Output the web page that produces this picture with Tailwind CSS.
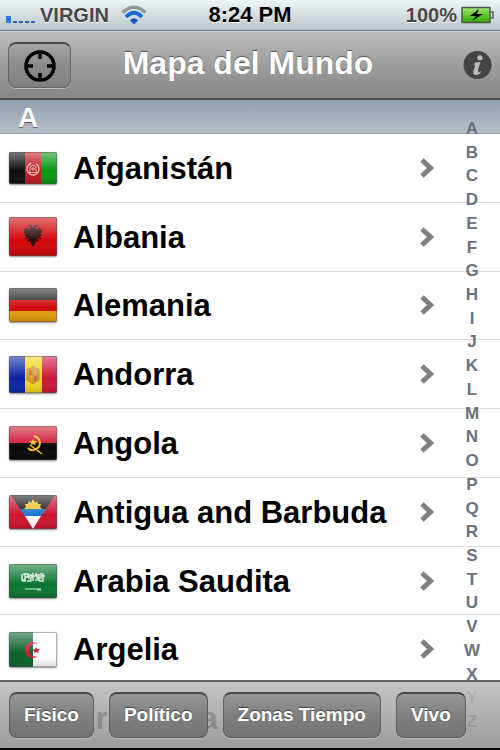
<!DOCTYPE html>
<html lang="es">
<head>
    <meta charset="UTF-8">
    <meta name="viewport" content="width=device-width, initial-scale=1.0">
    <title>Mapa del Mundo</title>
    <script src="https://cdn.jsdelivr.net/npm/@tailwindcss/browser@4"></script>
</head>
<body class="h-screen overflow-hidden bg-white font-['Liberation_Sans',Arial,sans-serif] font-bold text-black">
    <div class="relative flex h-full flex-col overflow-hidden">

        <!-- Status bar -->
        <div class="grid h-[31px] shrink-0 grid-cols-3 items-center border-b border-[#66727a] bg-linear-to-b from-[#edf4f7] to-[#bcc7cb] px-1.5 text-xl text-[#484848]">
            <div class="flex items-center">
                <svg class="mt-2 h-[8px] w-[30px]" viewBox="0 0 30 8">
                    <rect x="0" y="1" width="5" height="7" fill="#1f7fdf"/>
                    <path d="M7 7h4M13 7h4M19 7h4M25 7h4" stroke="#2e62b5" stroke-width="2"/>
                </svg>
                <span class="ml-1 [text-shadow:0_1px_0_#fff]">VIRGIN</span>
                <svg class="ml-3 h-[20px] w-[26px] shrink-0" viewBox="0 0 26 20" fill="none">
                    <path d="M1.500 7.500Q13 -3 24.500 7.500" stroke="#929698" stroke-width="3.500"/>
                    <path d="M5 12Q13 3.500 21 12" stroke="#1f68da" stroke-width="4"/>
                    <path d="M9 15.500Q13 11 17 15.500L13 19.500Z" fill="#1554cc"/>
                </svg>
            </div>
            <div class="text-center text-[22px] whitespace-nowrap text-black [text-shadow:0_1px_0_#fff]">8:24 PM</div>
            <div class="flex items-center justify-end gap-1">
                <span class="[text-shadow:0_1px_0_#fff]">100%</span>
                <svg class="h-[18px] w-[33px]" viewBox="0 0 33 18">
                    <defs>
                        <linearGradient id="charge" x1="0" y1="0" x2="0" y2="1">
                            <stop offset="0" stop-color="#a7e580"/>
                            <stop offset=".5" stop-color="#5fca2c"/>
                            <stop offset="1" stop-color="#35a80c"/>
                        </linearGradient>
                    </defs>
                    <rect x="1" y="1.500" width="28" height="15" fill="url(#charge)" stroke="#4a5a4a" stroke-width="1.500"/>
                    <path d="M30 6h2v6h-2" fill="none" stroke="#55605c" stroke-width="1.500"/>
                    <path d="M18 3L9 10h6l-4 5 11-7h-6z" fill="#000"/>
                </svg>
            </div>
        </div>

        <!-- Title bar -->
        <header class="grid h-[69px] shrink-0 grid-cols-[63px_1fr_63px] items-center border-t border-b-2 border-t-[#cfcfcf] border-b-[#4c4c4c] bg-linear-to-b from-[#bdbdbd] via-[#9e9e9e] to-[#878787] px-2">
            <button type="button" aria-label="Localizar" class="flex h-[46px] items-center justify-center rounded-lg border border-t-2 border-[#666] border-t-[#484848] bg-linear-to-b from-[#a5a5a5] from-0% via-[#8b8b8b] via-50% to-[#808080] shadow-[0_1px_0_#bbb]">
                <svg class="h-8 w-8" viewBox="0 0 32 32" fill="none" stroke="#000">
                    <circle cx="16" cy="16" r="14" stroke-width="3.500"/>
                    <path d="M16 2v7M16 23v7M2 16h7M23 16h7" stroke-width="3.500"/>
                </svg>
            </button>
            <h1 class="pr-1 pb-1 text-center text-[32px] leading-10 whitespace-nowrap text-white [text-shadow:0_-1px_1px_#555]">Mapa del Mundo</h1>
            <button type="button" aria-label="Información" class="h-[30px] w-[29px] justify-self-end">
                <svg class="h-full w-full" viewBox="0 0 30 30">
                    <circle cx="15" cy="15" r="14.500" fill="#444"/>
                    <circle cx="17.500" cy="7.500" r="2.700" fill="#b8b8b8"/>
                    <path d="M10.500 14.500Q13.500 11.500 18 12L15.500 20.500Q15 24 19 21Q17.500 25.500 13.500 25.500Q9.500 25.500 11 20.500L12.500 15.500Q12.500 14 10.500 14.500Z" fill="#b8b8b8"/>
                </svg>
            </button>
        </header>

        <main class="relative">
            <h2 class="h-[34px] border-b border-[#989fa7] bg-linear-to-b from-[#91a0ab] to-[#b7bfca] pl-[18px] text-[28px] leading-[35px] text-white [text-shadow:0_1px_1px_#555]">A</h2>
            <ul id="countries" class="grid h-[619px] auto-rows-fr"></ul>
            <nav id="index" aria-label="Índice" class="absolute top-[17px] right-3 grid h-[617px] w-8 auto-rows-fr text-center text-[17px] text-[#69727e]"></nav>
        </main>

        <footer class="absolute inset-x-0 bottom-0 flex h-[70px] items-center gap-[15px] border-t-2 border-b-2 border-t-[#636363] border-b-black bg-linear-to-b from-[#bebebe]/90 to-[#8b8b8b]/85 pl-[9px] text-[19px] text-white">
            <button type="button" class="h-[46px] rounded-lg border border-t-2 border-[#5f5f5f] border-t-[#484848] bg-linear-to-b from-[#979797] from-0% via-[#808080] via-50% to-[#737373] px-3.5 shadow-[0_1px_0_#bbb] [text-shadow:0_-1px_1px_#444]">Físico</button>
            <button type="button" class="h-[46px] rounded-lg border border-t-2 border-[#5f5f5f] border-t-[#484848] bg-linear-to-b from-[#979797] from-0% via-[#808080] via-50% to-[#737373] px-3.5 shadow-[0_1px_0_#bbb] [text-shadow:0_-1px_1px_#444]">Político</button>
            <button type="button" class="h-[46px] rounded-lg border border-t-2 border-[#5f5f5f] border-t-[#484848] bg-linear-to-b from-[#979797] from-0% via-[#808080] via-50% to-[#737373] px-3.5 shadow-[0_1px_0_#bbb] [text-shadow:0_-1px_1px_#444]">Zonas Tiempo</button>
            <button type="button" class="h-[46px] rounded-lg border border-t-2 border-[#5f5f5f] border-t-[#484848] bg-linear-to-b from-[#979797] from-0% via-[#808080] via-50% to-[#737373] px-3.5 shadow-[0_1px_0_#bbb] [text-shadow:0_-1px_1px_#444]">Vivo</button>
        </footer>
    </div>

    <script>
        // name, flag height, flag drawing (48 units wide)
        const countries = [
            ['Afganistán', 32, `
                <path fill="#0b0b0b" d="M0 0h16v32H0z"/><path fill="#c01822" d="M16 0h16v32H16z"/><path fill="#089613" d="M32 0h16v32H32z"/>
                <g fill="none" stroke="#f0b5a8"><circle cx="24" cy="17" r="6" stroke-width="1.5" stroke-dasharray="32 6" transform="rotate(-60 24 17)"/><path d="M21 20v-5l3-2 3 2v5M20 20.500h8M24 15v4M22 17h4"/></g>`],
            ['Albania', 39, `
                <path fill="#d00509" d="M0 0h48v39H0z"/>
                <path fill="#2b0d0d" d="M24 11l-2-3-4 0 3 2v3l-4-3v3l-2-2v5l2 0-2 2 2 1-1 3 4-1-2 4 3-1 1 3 2 3 2-3 1-3 3 1-2-4 4 1-1-3 2-1-2-2 2 0v-5l-2 2v-3l-4 3v-3l3-2-4 0z"/>`],
            ['Alemania', 34, `
                <path fill="#252525" d="M0 0h48v12H0z"/><path fill="#d10606" d="M0 12h48v11H0z"/><path fill="#e29b08" d="M0 23h48v11H0z"/>`],
            ['Andorra', 37, `
                <path fill="#0824a5" d="M0 0h16v37H0z"/><path fill="#f1d51c" d="M16 0h17v37H16z"/><path fill="#cf143c" d="M33 0h15v37H33z"/>
                <path fill="#cf9c42" stroke="#bd8f3c" d="M18 13l4-1 2-2 2 2 4 1v11l-6 4-6-4z"/>
                <path fill="#d9683a" d="M20 14h3v5h-3zM25 20h3v4l-3 2z"/><path fill="#e8a13c" d="M25 14h3v5h-3zM20 20h3v5z"/>`],
            ['Angola', 34, `
                <path fill="#cf1531" d="M0 0h48v17H0z"/><path fill="#070707" d="M0 17h48v17H0z"/>
                <g fill="none" stroke="#edc520" stroke-width="2"><path d="M25 10c7 2 8 10 2 13-3 2-6 1-8-1"/><path d="M21 19l12 9" stroke-width="1.500"/></g>
                <path fill="#edc520" d="M24 13l1 2h3l-2 2 1 2-3-1-2 1v-2l-2-2h3z"/>`],
            ['Antigua and Barbuda', 34, `
                <path fill="#cd1230" d="M0 0h48v34H0z"/><path fill="#191919" d="M2 0h44l-9 14H11z"/>
                <path fill="#f1c52c" d="M15 14l2-2-1-3 3 0 1-3 2 2 2-4 2 4 2-2 1 3 3 0-1 3 2 2z"/>
                <path fill="#1679cc" d="M11 14h26l-5 7H16z"/><path fill="#fff" d="M16 21h16l-8 13z"/>`],
            ['Arabia Saudita', 34, `
                <path fill="#08752f" d="M0 0h48v34H0z"/>
                <g fill="none" stroke="#d5e8da"><path stroke-width="1.500" d="M13 10v6h3v-6M14 10h5v3h-3M18 17h4v-7M20 10v5M24 9v8M22 12h5v-3M26 16h4v-6M28 10v4h4V9M34 9v8h-4M13 17h4M33 12h3"/><path d="M16 25h16M28 26h4"/></g>`],
            ['Argelia', 35, `
                <path fill="#09612b" d="M0 0h24v35H0z"/><path fill="#fff" d="M24 0h24v35H24z"/>
                <path fill="#d31a36" d="M29 12a8 8 0 1 0 0 12 6.500 6.500 0 1 1 0-12z"/>
                <path fill="#d31a36" d="M27 15l1 2 3 0-2 2 1 2-3-1-2 1v-2l-2-1 3-1z"/>`],
            ['Argentina', 32, `
                <path fill="#74acdf" d="M0 0h48v32H0z"/><path fill="#fff" d="M0 11h48v10H0z"/>`]
        ];

        document.getElementById('countries').innerHTML = countries.map(([name, height, art], i) => `
            <li class="border-b border-[#dcdcdc] bg-white">
                <a href="#" class="flex h-full items-center pr-[66px] pl-[9px]">
                    <svg class="w-[48px] shrink-0 rounded-[2px] shadow-[0_1px_2px_#888]" viewBox="0 0 48 ${height}" style="height:${height}px">
                        <defs>
                            <linearGradient id="gloss${i}" x1="0" y1="0" x2="0" y2="1">
                                <stop offset="0" stop-color="#fff" stop-opacity=".45"/>
                                <stop offset=".6" stop-color="#fff" stop-opacity="0"/>
                                <stop offset="1" stop-color="#000" stop-opacity=".15"/>
                            </linearGradient>
                        </defs>
                        ${art}
                        <rect width="48" height="${height}" fill="url(#gloss${i})"/>
                        <rect x=".5" y=".5" width="47" height="${height - 1}" fill="none" stroke="#555" stroke-opacity=".45"/>
                    </svg>
                    <span class="ml-4 flex-1 pt-0.5 text-[31px] leading-10 whitespace-nowrap">${name}</span>
                    <svg class="h-5 w-[14px] shrink-0" viewBox="0 0 14 20" fill="none">
                        <path d="M2 2l8.500 8L2 18" stroke="#808080" stroke-width="5"/>
                    </svg>
                </a>
            </li>`).join('');

        document.getElementById('index').innerHTML = [...'ABCDEFGHIJKLMNOPQRSTUVWXYZ'].map(letter =>
            `<a href="#" class="flex items-center justify-center leading-5">${letter}</a>`).join('');
    </script>
</body>
</html>
